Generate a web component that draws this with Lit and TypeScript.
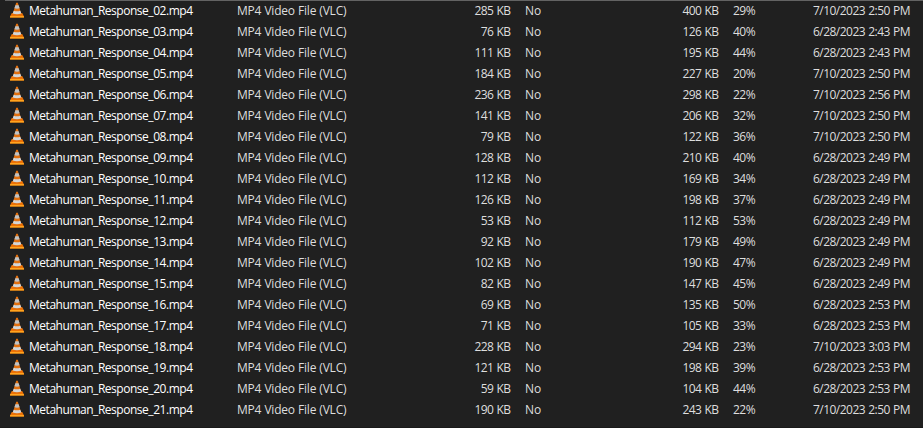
import { LitElement, html, css } from "lit";
import { customElement } from "lit/decorators.js";

type Row = [string, number, number, number, string];

const rows: Row[] = [
  ["02", 285, 400, 29, "7/10/2023 2:50 PM"],
  ["03", 76, 126, 40, "6/28/2023 2:43 PM"],
  ["04", 111, 195, 44, "6/28/2023 2:43 PM"],
  ["05", 184, 227, 20, "7/10/2023 2:50 PM"],
  ["06", 236, 298, 22, "7/10/2023 2:56 PM"],
  ["07", 141, 206, 32, "7/10/2023 2:50 PM"],
  ["08", 79, 122, 36, "7/10/2023 2:50 PM"],
  ["09", 128, 210, 40, "6/28/2023 2:49 PM"],
  ["10", 112, 169, 34, "6/28/2023 2:49 PM"],
  ["11", 126, 198, 37, "6/28/2023 2:49 PM"],
  ["12", 53, 112, 53, "6/28/2023 2:49 PM"],
  ["13", 92, 179, 49, "6/28/2023 2:49 PM"],
  ["14", 102, 190, 47, "6/28/2023 2:49 PM"],
  ["15", 82, 147, 45, "6/28/2023 2:49 PM"],
  ["16", 69, 135, 50, "6/28/2023 2:53 PM"],
  ["17", 71, 105, 33, "6/28/2023 2:53 PM"],
  ["18", 228, 294, 23, "7/10/2023 3:03 PM"],
  ["19", 121, 198, 39, "6/28/2023 2:53 PM"],
  ["20", 59, 104, 44, "6/28/2023 2:53 PM"],
  ["21", 190, 243, 22, "7/10/2023 2:50 PM"],
];

const cone = html`<svg class="icon" viewBox="0 0 16 16">
  <path d="M2.8 11h10.4L15 14.4v1H1v-1z" fill="#ee7206" />
  <path d="M1.2 14h13.6l.2 1.5H1z" fill="#ffa51f" />
  <path d="M7.2 0.8h1.6L12.4 12.2Q8 14.2 3.6 12.2z" fill="#e2700f" />
  <path d="M6.4 3.2h3.2l1 3.1q-2.6.9-5.2 0z" fill="#bfc3c6" />
  <path d="M4.7 8.8q3.3 1 6.6 0l1 2.8q-4.3 1.4-8.6 0z" fill="#d3d6d8" />
</svg>`;

@customElement("app-root")
export class AppRoot extends LitElement {
  static styles = css`
    :host {
      display: block;
      box-sizing: border-box;
      height: 428px;
      overflow: hidden;
      background: #202020;
      border-bottom: 1px solid #1a1a1a;
      color: #dedede;
      font: 12px/21px "Open Sans", "Noto Sans", sans-serif;
      white-space: nowrap;
    }
    .rule {
      height: 1px;
      margin-left: 5px;
      background: #636363;
    }
    .list {
      margin-top: -1px;
    }
    .row {
      display: grid;
      grid-template-columns: 29px 208px 174px 99.5px 14.5px 115px 78.5px 14.5px 77px 100px;
      height: 21px;
    }
    .icon {
      width: 16px;
      height: 16px;
      margin: 2px 0 0 9px;
    }
    .name {
      color: #fff;
      letter-spacing: -0.47px;
    }
    .type {
      letter-spacing: -0.2px;
      word-spacing: 0.2px;
    }
    .num {
      text-align: right;
      letter-spacing: -0.6px;
      word-spacing: 0.9px;
    }
    .size {
      grid-column: 4;
    }
    .guard {
      grid-column: 6;
    }
    .ratio {
      grid-column: 9;
      letter-spacing: -0.5px;
    }
    .date {
      letter-spacing: -0.5px;
      word-spacing: 0.4px;
    }
  `;

  render() {
    return html`<div class="rule"></div>
      <div class="list">
        ${rows.map(
          ([id, packed, size, ratio, date]) => html`<div class="row">
            ${cone}
            <span class="name">Metahuman_Response_${id}.mp4</span>
            <span class="type">MP4 Video File (VLC)</span>
            <span class="num size">${packed} KB</span>
            <span class="guard">No</span>
            <span class="num">${size} KB</span>
            <span class="ratio">${ratio}%</span>
            <span class="num date">${date}</span>
          </div>`
        )}
      </div>`;
  }
}
